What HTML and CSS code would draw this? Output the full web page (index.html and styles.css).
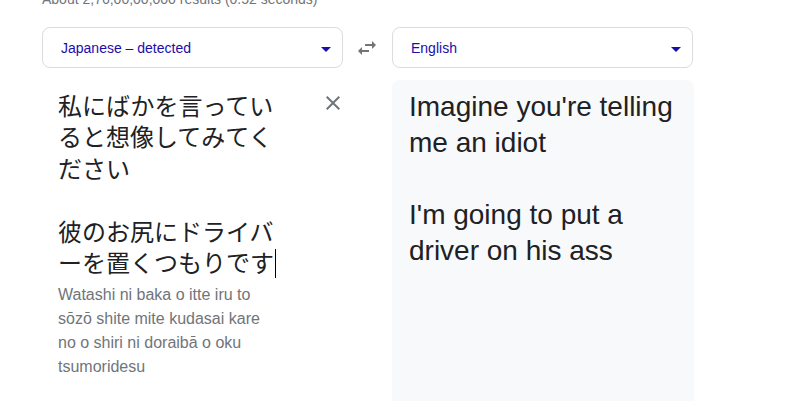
FILE: index.html
```html
<!DOCTYPE html>
<html lang="en">
<head>
<meta charset="utf-8">
<title>Translate</title>
<link rel="stylesheet" href="styles.css">
</head>
<body>
<div class="page">
  <div class="stats">About 2,76,00,00,000 results (0.52 seconds)</div>

  <div class="lang-row">
    <div class="lang-select">
      <span class="lang-name">Japanese – detected</span>
      <span class="caret-down"></span>
    </div>
    <div class="swap">
      <svg width="24" height="24" viewBox="0 0 24 24"><path d="M6.99 11L3 15l3.99 4v-3H14v-2H6.99v-3zM21 9l-3.99-4v3H10v2h7.01v3L21 9z" fill="#70757a"/></svg>
    </div>
    <div class="lang-select">
      <span class="lang-name">English</span>
      <span class="caret-down"></span>
    </div>
  </div>

  <div class="panels">
    <div class="source">
      <div class="source-col">
        <div class="source-text">私にばかを言ってい<br>ると想像してみてく<br>ださい<br><br>彼のお尻にドライバ<br>ーを置くつもりです<span class="cursor"></span></div>
        <div class="romaji">Watashi ni baka o itte iru to sōzō shite mite kudasai kare no o shiri ni doraibā o oku tsumoridesu</div>
      </div>
      <div class="clear">
        <svg width="24" height="24" viewBox="0 0 24 24"><path d="M19 6.41L17.59 5 12 10.59 6.41 5 5 6.41 10.59 12 5 17.59 6.41 19 12 13.41 17.59 19 19 17.59 13.41 12z" fill="#70757a"/></svg>
      </div>
    </div>
    <div class="target">
      <div class="target-text">Imagine you're telling me an idiot<br><br>I'm going to put a driver on his ass</div>
    </div>
  </div>
</div>
</body>
</html>
```

FILE: styles.css
```css
html, body {
  margin: 0;
  padding: 0;
  overflow: hidden;
  background: #ffffff;
}

body {
  font-family: "Liberation Sans", Arial, sans-serif;
  color: #202124;
}

.page {
  padding-left: 42px;
  width: 652px;
}

.stats {
  margin-top: -11px;
  height: 20px;
  line-height: 20px;
  font-size: 14px;
  color: #70757a;
  white-space: nowrap;
}

.lang-row {
  display: flex;
  align-items: center;
  margin-top: 18px;
}

.lang-select {
  box-sizing: border-box;
  width: 301px;
  height: 41px;
  border: 1px solid #dadce0;
  border-radius: 8px;
  display: flex;
  align-items: center;
  justify-content: space-between;
  padding: 0 11px 0 18px;
}

.lang-name {
  font-size: 14px;
  color: #1a0dab;
}

.caret-down {
  width: 0;
  height: 0;
  border-left: 5px solid transparent;
  border-right: 5px solid transparent;
  border-top: 5px solid #1a0dab;
  margin-top: 4px;
}

.swap {
  width: 49px;
  display: flex;
  justify-content: center;
  padding-left: 1px;
  box-sizing: border-box;
}

.swap svg {
  display: block;
  margin-left: -2px;
}

.panels {
  display: flex;
  margin-top: 12px;
}

.source {
  width: 301px;
  display: flex;
  padding-left: 16px;
  box-sizing: border-box;
}

.source-col {
  width: 220px;
}

.source-text {
  padding-top: 9px;
  font-family: "Noto Sans CJK JP", sans-serif;
  font-size: 24px;
  line-height: 31.4px;
  color: #202124;
  white-space: nowrap;
}

.cursor {
  display: inline-block;
  width: 0;
  height: 29px;
  border-left: 1px solid #000;
  vertical-align: -6px;
  margin-left: 1px;
}

.romaji {
  margin-top: 5px;
  font-size: 16px;
  line-height: 24px;
  color: #70757a;
}

.clear {
  margin-left: 45px;
  padding-top: 11px;
}

.clear svg {
  display: block;
}

.target {
  margin-left: 49px;
  width: 302px;
  height: 330px;
  box-sizing: border-box;
  background: #f8f9fa;
  border-radius: 8px;
  padding: 9px 17px;
}

.target-text {
  font-size: 28px;
  line-height: 36px;
  color: #202124;
}
```
